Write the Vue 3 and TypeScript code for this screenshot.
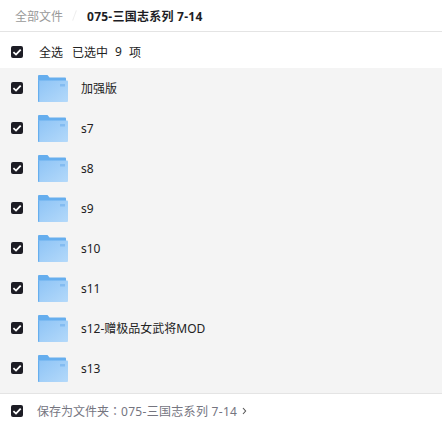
<template>
  <div class="page">
    <div class="crumbs">
      <span class="crumbs__root">全部文件</span>
      <span class="crumbs__sep"></span>
      <span class="crumbs__current">075-三国志系列 7-14</span>
    </div>
    <div class="select-all">
      <span class="check">
        <svg viewBox="0 0 12 12" width="12" height="12"><path d="M2.4 6.2 5 8.6 9.7 3.6" /></svg>
      </span>
      <span class="select-all__label">全选</span>
      <span class="select-all__count">
        <span>已选中</span>
        <span>9</span>
        <span>项</span>
      </span>
    </div>
    <div class="list">
      <div v-for="item in items" :key="item" class="row">
        <span class="check">
          <svg viewBox="0 0 12 12" width="12" height="12"><path d="M2.4 6.2 5 8.6 9.7 3.6" /></svg>
        </span>
        <svg class="folder" viewBox="0 0 30 27" width="30" height="27">
          <defs>
            <linearGradient id="folderFront" x1="0" y1="0" x2="1" y2="1">
              <stop offset="0" stop-color="#8ec4f6" />
              <stop offset="1" stop-color="#b4d9fa" />
            </linearGradient>
          </defs>
          <path d="M0 1Q0 0 1 0H9.5L11.5 2.5H27Q28 2.5 28 3.5V8H0Z" fill="#66aeee" />
          <path d="M0 5.5H29Q30 5.5 30 6.5V26Q30 27 29 27H1Q0 27 0 26Z" fill="url(#folderFront)" />
          <path d="M0 5.5H1.2V27H1Q0 27 0 26Z" fill="#66aeee" />
          <rect x="22" y="9" width="5" height="2.5" fill="#84bcf1" />
        </svg>
        <span class="row__name">{{ item }}</span>
      </div>
    </div>
    <div class="footer">
      <span class="check">
        <svg viewBox="0 0 12 12" width="12" height="12"><path d="M2.4 6.2 5 8.6 9.7 3.6" /></svg>
      </span>
      <span class="footer__text">保存为文件夹<span class="footer__colon">：</span><span class="footer__name">075-三国志系列 7-14</span></span>
      <svg class="footer__arrow" viewBox="0 0 5 8" width="5" height="8"><path d="M1 1 3.6 4 1 7" /></svg>
    </div>
  </div>
</template>

<script setup lang="ts">
const items: string[] = ['加强版', 's7', 's8', 's9', 's10', 's11', 's12-赠极品女武将MOD', 's13'];
</script>

<style scoped>
.page {
  width: 442px;
  height: 426px;
  overflow: hidden;
  background: #fff;
  font-family: "Noto Sans", "Noto Sans CJK SC", sans-serif;
  font-size: 12px;
  color: #222;
}

.crumbs {
  display: flex;
  align-items: center;
  height: 31px;
  padding-left: 15px;
  border-bottom: 1px solid #e4e4e4;
}

.crumbs__root {
  color: #999;
}

.crumbs__sep {
  width: 1px;
  height: 11px;
  margin: 0 12px 0 11px;
  background: #eee;
  transform: rotate(20deg);
}

.crumbs__current {
  font-weight: 700;
  letter-spacing: 0.25px;
  color: #1d1d25;
}

.select-all {
  display: flex;
  align-items: center;
  height: 36px;
  padding: 4px 0 0 11px;
  box-sizing: border-box;
}

.select-all__label {
  margin-left: 16px;
}

.select-all__count {
  display: flex;
  gap: 7px;
  margin-left: 9px;
}

.check {
  display: flex;
  flex: none;
  align-items: center;
  justify-content: center;
  width: 12px;
  height: 12px;
  border-radius: 2px;
  background: #1d1d25;
}

.check path {
  fill: none;
  stroke: #fff;
  stroke-width: 1.8;
}

.list {
  height: 325px;
  background: #f4f4f4;
}

.row {
  display: flex;
  align-items: center;
  height: 40px;
  padding-left: 11px;
}

.folder {
  flex: none;
  margin-left: 15px;
}

.row__name {
  margin-left: 13px;
}

.footer {
  display: flex;
  align-items: center;
  height: 33px;
  padding: 2px 0 0 11px;
  box-sizing: border-box;
  border-top: 1px solid #e4e4e4;
}

.footer__text {
  margin-left: 14px;
  color: #75757f;
}

.footer__colon {
  font-family: "Noto Sans CJK TC", sans-serif;
}

.footer__name {
  letter-spacing: 0.3px;
}

.footer__arrow {
  margin-left: 5px;
}

.footer__arrow path {
  fill: none;
  stroke: #555;
  stroke-width: 1.1;
}
</style>

<style>
html,
body {
  margin: 0;
  background: #fff;
}
</style>
